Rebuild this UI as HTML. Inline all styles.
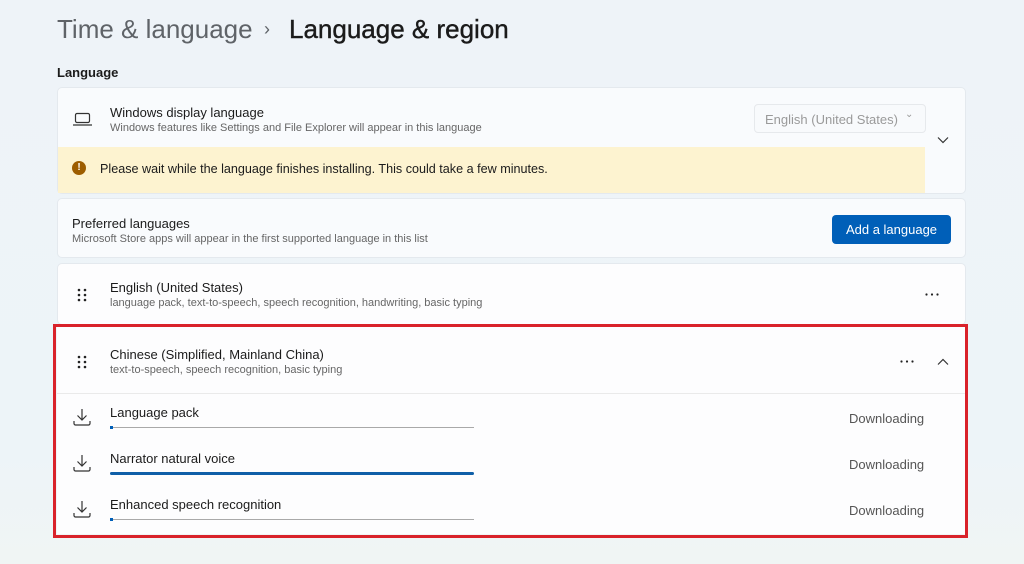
<!DOCTYPE html>
<html style="background:#eef3f6"><head><style>
*{margin:0;padding:0;box-sizing:border-box}
html,body{width:1024px;height:564px;overflow:hidden}
body{background:linear-gradient(180deg,#eef3f8,#edf4f8 80%,#f0f5f4);font-family:"Liberation Sans",sans-serif;color:#1b1b1b;position:relative}
.a{position:absolute}
.card{position:absolute;left:57px;width:909px;background:#f9fbfd;border:1px solid #e4e9ee;border-radius:5px}
.t{font-size:13px;color:#1b1b1b}
.s{font-size:11px;color:#666}
.bar{position:absolute;left:110px;width:364px;height:2px;background:#a9a9a9}
.dl{position:absolute;left:73px;width:18px;height:20px}
.dn{position:absolute;left:849px;font-size:13px;color:#555}
.dots{position:absolute;font-size:9px;letter-spacing:0.5px}
</style></head><body>
<div class="a" style="left:57px;top:14px;font-size:26px;color:#5f6368">Time &amp; language</div>
<div class="a" style="left:264px;top:19px;font-size:18px;color:#5f6368">›</div>
<div class="a" style="left:289px;top:14px;font-size:26px;color:#1b1b1b;-webkit-text-stroke:0.4px #1b1b1b">Language &amp; region</div>
<div class="a" style="left:57px;top:65px;font-size:13px;font-weight:bold;color:#1b1b1b">Language</div>

<div class="card" style="top:87px;height:107px"></div>
<svg class="a" style="left:73px;top:112px" width="20" height="16"><rect x="2.5" y="1.5" width="14" height="9" rx="1.5" fill="none" stroke="#333" stroke-width="1.2"/><line x1="0" y1="13" x2="19" y2="13" stroke="#333" stroke-width="1.2"/></svg>
<div class="a t" style="left:110px;top:105px">Windows display language</div>
<div class="a s" style="left:110px;top:122px">Windows features like Settings and File Explorer will appear in this language</div>
<div class="a" style="left:754px;top:104px;width:172px;height:29px;border:1px solid #e6e9ec;border-radius:4px;background:#f8fafc;font-size:13px;color:#9a9a9a;padding:7px 0 0 10px">English (United States)<span style="position:absolute;left:150px;top:4px;font-size:10px">⌄</span></div>
<svg class="a" style="left:937px;top:136px" width="12" height="8"><path d="M1 1.5l5 5 5-5" fill="none" stroke="#333" stroke-width="1.2"/></svg>
<div class="a" style="left:58px;top:147px;width:867px;height:46px;background:#fdf3d0"></div>
<div class="a" style="left:72px;top:161px;width:14px;height:14px;border-radius:50%;background:#9d5d00;color:#fff;font-size:10px;font-weight:bold;text-align:center;line-height:14px">!</div>
<div class="a t" style="left:100px;top:162px;font-size:12.6px">Please wait while the language finishes installing. This could take a few minutes.</div>

<div class="card" style="top:198px;height:60px"></div>
<div class="a t" style="left:72px;top:216px">Preferred languages</div>
<div class="a s" style="left:72px;top:233px">Microsoft Store apps will appear in the first supported language in this list</div>
<div class="a" style="left:832px;top:215px;width:119px;height:29px;background:#005fb8;border-radius:4px;color:#fff;font-size:13px;text-align:center;line-height:29px">Add a language</div>

<div class="card" style="top:263px;height:62px;background:#fdfdfe"></div>
<svg class="a" style="left:77px;top:288px" width="10" height="14" fill="#222"><circle cx="2" cy="2" r="1.3"/><circle cx="8" cy="2" r="1.3"/><circle cx="2" cy="7" r="1.3"/><circle cx="8" cy="7" r="1.3"/><circle cx="2" cy="12" r="1.3"/><circle cx="8" cy="12" r="1.3"/></svg>
<div class="a t" style="left:110px;top:280px">English (United States)</div>
<div class="a s" style="left:110px;top:297px">language pack, text-to-speech, speech recognition, handwriting, basic typing</div>
<svg class="a" style="left:925px;top:293px" width="14" height="3" fill="#222"><circle cx="1.5" cy="1.5" r="1.1"/><circle cx="7" cy="1.5" r="1.1"/><circle cx="12.5" cy="1.5" r="1.1"/></svg>

<div class="a" style="left:57px;top:326px;width:908px;height:208px;background:#fdfdfe"></div>
<div class="a" style="left:57px;top:393px;width:908px;height:1px;background:#eaeaea"></div>
<svg class="a" style="left:77px;top:355px" width="10" height="14" fill="#222"><circle cx="2" cy="2" r="1.3"/><circle cx="8" cy="2" r="1.3"/><circle cx="2" cy="7" r="1.3"/><circle cx="8" cy="7" r="1.3"/><circle cx="2" cy="12" r="1.3"/><circle cx="8" cy="12" r="1.3"/></svg>
<div class="a t" style="left:110px;top:347px">Chinese (Simplified, Mainland China)</div>
<div class="a s" style="left:110px;top:364px">text-to-speech, speech recognition, basic typing</div>
<svg class="a" style="left:900px;top:360px" width="14" height="3" fill="#222"><circle cx="1.5" cy="1.5" r="1.1"/><circle cx="7" cy="1.5" r="1.1"/><circle cx="12.5" cy="1.5" r="1.1"/></svg>
<svg class="a" style="left:937px;top:358px" width="12" height="8"><path d="M1 6.5l5-5 5 5" fill="none" stroke="#333" stroke-width="1.2"/></svg>

<svg class="dl" style="top:407px" viewBox="0 0 18 20"><path d="M9 2v11M4.5 8.5L9 13l4.5-4.5M1 14v2.5a1.5 1.5 0 0 0 1.5 1.5h13a1.5 1.5 0 0 0 1.5-1.5V14" fill="none" stroke="#333" stroke-width="1.2"/></svg>
<div class="a t" style="left:110px;top:405px">Language pack</div>
<div class="bar" style="top:427px;height:1px"></div><div class="a" style="left:110px;top:426px;width:3px;height:3px;background:#005fb8"></div>
<div class="dn" style="top:411px">Downloading</div>

<svg class="dl" style="top:453px" viewBox="0 0 18 20"><path d="M9 2v11M4.5 8.5L9 13l4.5-4.5M1 14v2.5a1.5 1.5 0 0 0 1.5 1.5h13a1.5 1.5 0 0 0 1.5-1.5V14" fill="none" stroke="#333" stroke-width="1.2"/></svg>
<div class="a t" style="left:110px;top:451px">Narrator natural voice</div>
<div class="a" style="left:110px;top:472px;width:364px;height:3px;background:#0f5fa8;border-radius:2px"></div>
<div class="dn" style="top:457px">Downloading</div>

<svg class="dl" style="top:499px" viewBox="0 0 18 20"><path d="M9 2v11M4.5 8.5L9 13l4.5-4.5M1 14v2.5a1.5 1.5 0 0 0 1.5 1.5h13a1.5 1.5 0 0 0 1.5-1.5V14" fill="none" stroke="#333" stroke-width="1.2"/></svg>
<div class="a t" style="left:110px;top:497px">Enhanced speech recognition</div>
<div class="bar" style="top:519px;height:1px"></div><div class="a" style="left:110px;top:518px;width:3px;height:3px;background:#005fb8"></div>
<div class="dn" style="top:503px">Downloading</div>

<div class="a" style="left:53px;top:324px;width:915px;height:214px;border:3px solid #d9222a"></div>
</body></html>
